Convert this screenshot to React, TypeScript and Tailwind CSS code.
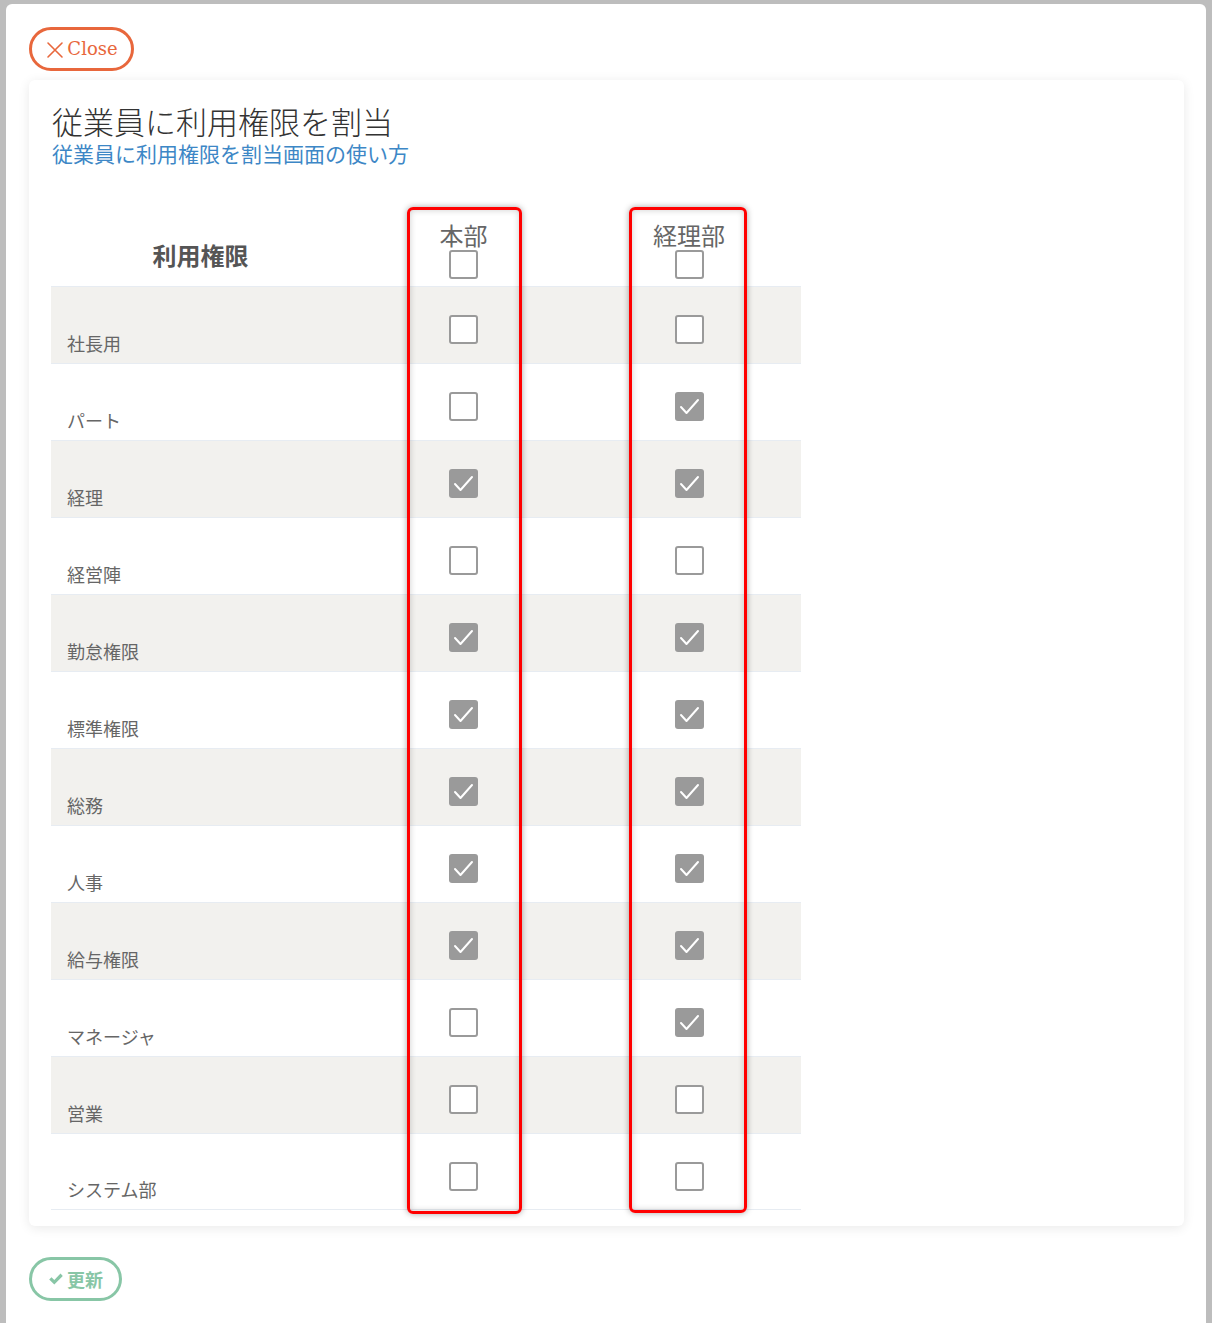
import React from "react";

const rows: { label: string; a: boolean; b: boolean }[] = [
  { label: "社長用", a: false, b: false },
  { label: "パート", a: false, b: true },
  { label: "経理", a: true, b: true },
  { label: "経営陣", a: false, b: false },
  { label: "勤怠権限", a: true, b: true },
  { label: "標準権限", a: true, b: true },
  { label: "総務", a: true, b: true },
  { label: "人事", a: true, b: true },
  { label: "給与権限", a: true, b: true },
  { label: "マネージャ", a: false, b: true },
  { label: "営業", a: false, b: false },
  { label: "システム部", a: false, b: false },
];

function Box({ checked }: { checked: boolean }) {
  if (checked) {
    return (
      <div className="w-[29px] h-[29px] rounded-[3px] bg-[#9a9a9a] flex items-center justify-center">
        <svg width="29" height="29" viewBox="0 0 29 29" fill="none">
          <path d="M6 15 L11.5 21 L23 8" stroke="white" strokeWidth="2" strokeLinecap="round" strokeLinejoin="round" />
        </svg>
      </div>
    );
  }
  return <div className="w-[29px] h-[29px] rounded-[3px] border-2 border-[#9a9a9a] bg-white" />;
}

const jp = { fontFamily: '"Noto Sans CJK JP", "Noto Sans", sans-serif' };

export default function App() {
  return (
    <div className="min-h-[1323px] bg-[#bdbdbd] pt-[4px] px-[6px] overflow-hidden" style={jp}>
      <div className="bg-white rounded-t-[6px] min-h-[1319px] pl-[23px] pr-[22px] pt-[23px]">
        <button
          className="h-[44px] w-[105px] rounded-full border-[3px] border-[#e8673c] text-[#e8673c] flex items-center justify-center gap-[2px] bg-white"
          style={{ fontFamily: '"DejaVu Serif", serif' }}
        >
          <svg width="20" height="20" viewBox="0 0 20 20" fill="none" className="mt-[1px]">
            <path d="M3 3 L17 17 M17 3 L3 17" stroke="#e8673c" strokeWidth="1.6" strokeLinecap="round" />
          </svg>
          <span className="text-[18px] leading-none">Close</span>
        </button>

        <div className="mt-[9px] bg-white rounded-[6px] shadow-[0_2px_12px_rgba(0,0,0,0.09)] pl-[22px] pr-[22px] pt-[25px] pb-[16px]">
          <div className="text-[31px] leading-[32px] font-light text-[#333] pl-[1px] mb-[3px]">従業員に利用権限を割当</div>
          <div className="text-[21px] leading-[26px] text-[#3d87c6] pl-[1px]">従業員に利用権限を割当画面の使い方</div>

          <div className="relative mt-[41px] w-[750px]">
            {/* header */}
            <div className="grid grid-cols-[299px_227px_224px] h-[79px]">
              <div className="flex items-center justify-center pt-[16px] text-[24px] font-bold text-[#555]">利用権限</div>
              <div className="flex flex-col items-center pt-[12px]">
                <div className="text-[24px] leading-[31px] text-[#666]">本部</div>
                <Box checked={false} />
              </div>
              <div className="flex flex-col items-center pt-[12px]">
                <div className="text-[24px] leading-[31px] text-[#666]">経理部</div>
                <Box checked={false} />
              </div>
            </div>
            {/* rows */}
            {rows.map((r, i) => (
              <div
                key={r.label}
                className={`grid grid-cols-[299px_227px_224px] h-[77px] border-t border-[#e7ecf2] ${i % 2 === 0 ? "bg-[#f2f1ee]" : "bg-white"} ${i === rows.length - 1 ? "border-b" : ""}`}
              >
                <div className="flex items-end pl-[16px] pb-[8px] text-[18px] leading-[24px] text-[#666]">{r.label}</div>
                <div className="flex justify-center pt-[28px]">
                  <Box checked={r.a} />
                </div>
                <div className="flex justify-center pt-[28px]">
                  <Box checked={r.b} />
                </div>
              </div>
            ))}

            {/* highlight overlays */}
            <div className="absolute left-[356px] top-0 w-[115px] h-[1007px] border-[3px] border-[#ff0000] rounded-[6px] shadow-[0_0_6px_rgba(0,0,0,0.35),inset_0_0_6px_rgba(0,0,0,0.2)] pointer-events-none" />
            <div className="absolute left-[578px] top-0 w-[118px] h-[1006px] border-[3px] border-[#ff0000] rounded-[6px] shadow-[0_0_6px_rgba(0,0,0,0.35),inset_0_0_6px_rgba(0,0,0,0.2)] pointer-events-none" />
          </div>
        </div>

        <button className="mt-[31px] h-[44px] w-[93px] rounded-full border-[3px] border-[#88c6a6] text-[#88c6a6] flex items-center justify-center gap-[3px] bg-white">
          <svg width="16" height="16" viewBox="0 0 16 16" fill="#88c6a6">
            <path d="M1.2 8.6 L3.5 6.3 L6.3 9.1 L12.5 2.6 L14.8 4.9 L6.3 13.5 Z" />
          </svg>
          <span className="text-[18px] font-bold leading-none">更新</span>
        </button>
      </div>
    </div>
  );
}
